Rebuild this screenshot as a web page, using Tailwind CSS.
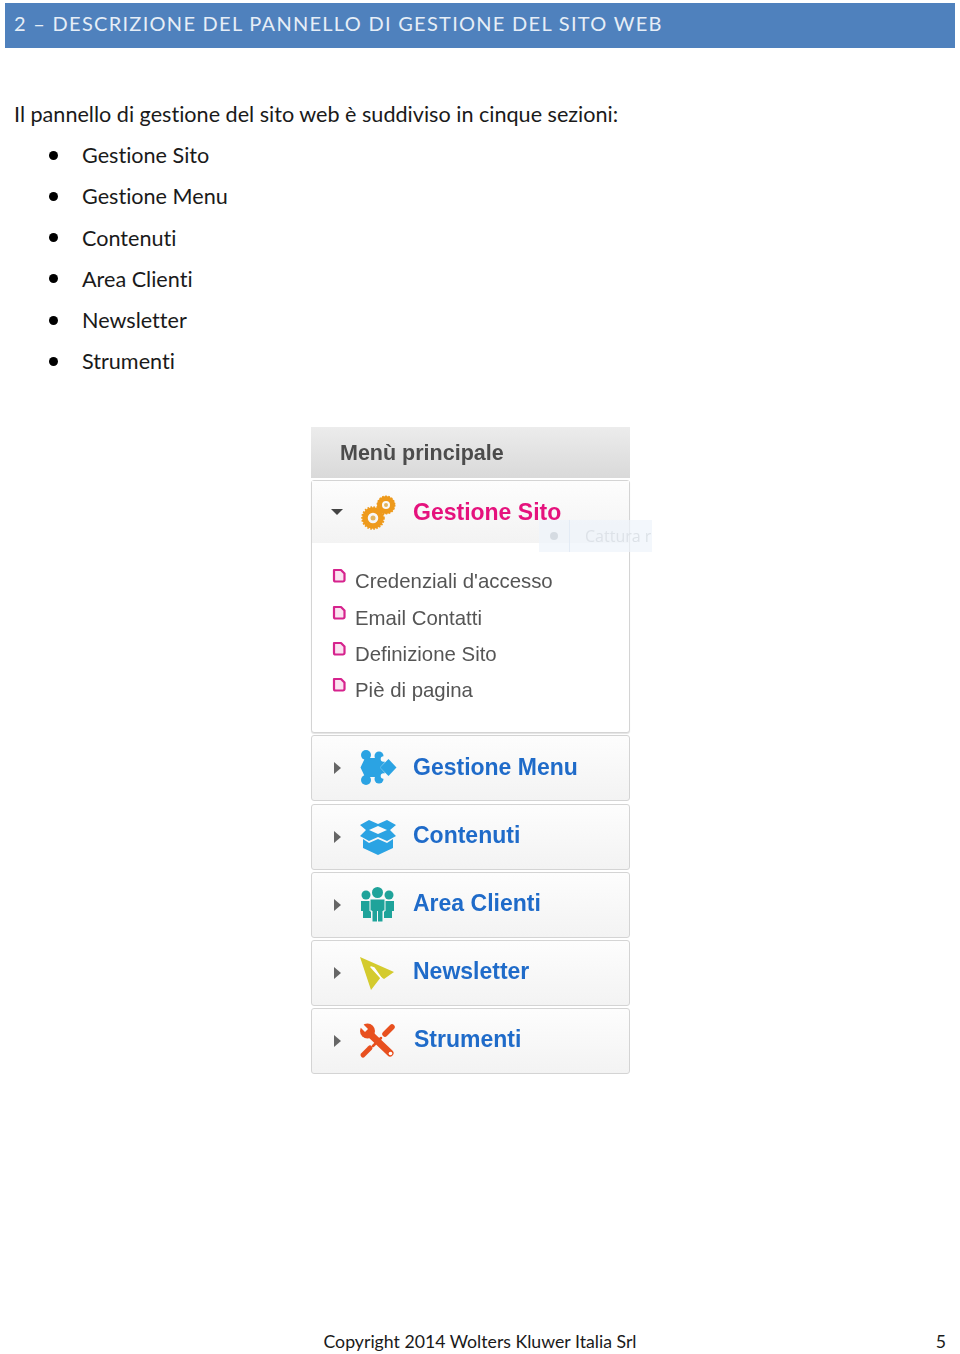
<!DOCTYPE html>
<html lang="it">
<head>
    <meta charset="UTF-8">
    <title>Descrizione del pannello di gestione</title>
    <script src="https://cdn.jsdelivr.net/npm/@tailwindcss/browser@4"></script>
</head>
<body class="bg-white font-['Lato','Open_Sans',sans-serif] text-[#1a1a1a] [font-variant-ligatures:none]">
    <div class="h-[1354px] flex flex-col overflow-hidden">
        <!-- Section title -->
        <header class="mt-[3px] mx-[5px] h-[45px] bg-[#4f81bd] flex items-center pl-[9px] pb-[5px] text-[#e6eef7] text-[20px] tracking-[1.28px]">
            2 – DESCRIZIONE DEL PANNELLO DI GESTIONE DEL SITO WEB
        </header>

        <p class="mt-[52px] ml-[14px] text-[21.6px] leading-[28px]">Il pannello di gestione del sito web è suddiviso in cinque sezioni:</p>

        <ul class="mt-[13px] ml-[49px] flex flex-col gap-[13.3px] text-[21.6px] leading-[28px]">
            <li class="flex items-center"><span class="w-[9px] h-[9px] rounded-full bg-black mr-[24px]"></span>Gestione Sito</li>
            <li class="flex items-center"><span class="w-[9px] h-[9px] rounded-full bg-black mr-[24px]"></span>Gestione Menu</li>
            <li class="flex items-center"><span class="w-[9px] h-[9px] rounded-full bg-black mr-[24px]"></span>Contenuti</li>
            <li class="flex items-center"><span class="w-[9px] h-[9px] rounded-full bg-black mr-[24px]"></span>Area Clienti</li>
            <li class="flex items-center"><span class="w-[9px] h-[9px] rounded-full bg-black mr-[24px]"></span>Newsletter</li>
            <li class="flex items-center"><span class="w-[9px] h-[9px] rounded-full bg-black mr-[24px]"></span>Strumenti</li>
        </ul>

        <!-- Menu screenshot -->
        <div class="relative mt-[52px] ml-[311px] w-[319px] font-['Liberation_Sans',Arial,sans-serif] blur-[0.35px]">
            <div class="h-[51px] bg-gradient-to-b from-[#ececec] to-[#d9d9d9] flex items-center pl-[29px] text-[21.5px] font-bold text-[#4c4c4c]">Menù principale</div>

            <div class="mt-[2px] h-[253px] border border-[#d4d4d4] rounded-[3px] bg-white shadow-[0_1px_1px_#e4e4e4]">
                <div class="h-[62px] bg-gradient-to-b from-[#fdfdfd] to-[#f3f3f3] flex items-center">
                    <svg class="ml-[19px]" width="12" height="6" viewBox="0 0 12 6"><path d="M0 0H12L6 6Z" fill="#444"/></svg>
                    <svg class="ml-[18px]" width="36" height="38" viewBox="0 0 36 38">
                        <circle cx="25" cy="12" r="6.5" fill="none" stroke="#ee9a1c" stroke-width="5"/>
                        <circle cx="25" cy="12" r="8.5" fill="none" stroke="#ee9a1c" stroke-width="2" stroke-dasharray="1.6 1.4"/>
                        <circle cx="25" cy="12" r="2" fill="#e3b55f"/>
                        <circle cx="12" cy="25" r="8" fill="none" stroke="#ee9a1c" stroke-width="5.5"/>
                        <circle cx="12" cy="25" r="10.8" fill="none" stroke="#ee9a1c" stroke-width="2" stroke-dasharray="1.6 1.4"/>
                        <circle cx="12" cy="25" r="2.5" fill="#e3b55f"/>
                    </svg>
                    <span class="ml-[16px] text-[23px] font-bold text-[#e5127d]">Gestione Sito</span>
                </div>
                <ul class="mt-[26px] ml-[20px] flex flex-col gap-[12.1px] text-[20.4px] leading-[24px] text-[#555]">
                    <li class="flex"><svg class="mt-[-1px] mr-[9px]" width="14" height="16" viewBox="0 0 14 16"><path d="M2 2H9L12.500 5.500V12A1.500 1.500 0 0 1 11 13.500H3.500A1.500 1.500 0 0 1 2 12Z" fill="#fbe3f1" stroke="#d6238d" stroke-width="2.200" stroke-linejoin="round"/></svg>Credenziali d'accesso</li>
                    <li class="flex"><svg class="mt-[-1px] mr-[9px]" width="14" height="16" viewBox="0 0 14 16"><path d="M2 2H9L12.500 5.500V12A1.500 1.500 0 0 1 11 13.500H3.500A1.500 1.500 0 0 1 2 12Z" fill="#fbe3f1" stroke="#d6238d" stroke-width="2.200" stroke-linejoin="round"/></svg>Email Contatti</li>
                    <li class="flex"><svg class="mt-[-1px] mr-[9px]" width="14" height="16" viewBox="0 0 14 16"><path d="M2 2H9L12.500 5.500V12A1.500 1.500 0 0 1 11 13.500H3.500A1.500 1.500 0 0 1 2 12Z" fill="#fbe3f1" stroke="#d6238d" stroke-width="2.200" stroke-linejoin="round"/></svg>Definizione Sito</li>
                    <li class="flex"><svg class="mt-[-1px] mr-[9px]" width="14" height="16" viewBox="0 0 14 16"><path d="M2 2H9L12.500 5.500V12A1.500 1.500 0 0 1 11 13.500H3.500A1.500 1.500 0 0 1 2 12Z" fill="#fbe3f1" stroke="#d6238d" stroke-width="2.200" stroke-linejoin="round"/></svg>Piè di pagina</li>
                </ul>
            </div>

            <div class="mt-[2px] flex flex-col gap-[2.1px]">
                <div class="h-[66px] border border-[#d4d4d4] rounded-[3px] bg-gradient-to-b from-[#fdfdfd] to-[#f3f3f3] flex items-center text-[23px] font-bold text-[#1f6bc9] pb-[3px]">
                    <svg class="ml-[22px] mt-[3px]" width="7" height="12" viewBox="0 0 7 12"><path d="M0 0L7 6L0 12Z" fill="#666"/></svg>
                    <svg class="ml-[18px] mt-[3px]" width="38" height="38" viewBox="0 0 38 38">
                        <g fill="#2ba3e3">
                            <circle cx="7" cy="6" r="5"/><circle cx="20" cy="7" r="4.500"/>
                            <circle cx="7" cy="31" r="5"/><circle cx="20" cy="30" r="4.500"/>
                            <path d="M6 9H22L26 13 21 18.500 26 24 22 28H6L1.500 18.500Z"/>
                            <path d="M21 18.500L29.500 10 37.500 18.500 29.500 27Z"/>
                        </g>
                        <circle cx="24.500" cy="10" r="2.800" fill="#fafafa"/><circle cx="24.500" cy="27" r="2.800" fill="#fafafa"/>
                    </svg>
                    <span class="ml-[16px]">Gestione Menu</span>
                </div>
                <div class="h-[66px] border border-[#d4d4d4] rounded-[3px] bg-gradient-to-b from-[#fdfdfd] to-[#f3f3f3] flex items-center text-[23px] font-bold text-[#1f6bc9] pb-[3px]">
                    <svg class="ml-[22px] mt-[3px]" width="7" height="12" viewBox="0 0 7 12"><path d="M0 0L7 6L0 12Z" fill="#666"/></svg>
                    <svg class="ml-[18px] mt-[3px]" width="38" height="36" viewBox="0 0 38 36">
                        <path d="M1 6L10 1 19 5 28 1 37 6 31 11 37 17 28 22 19 18 10 22 1 17 7 11Z" fill="#2ba3e3"/>
                        <path d="M10 11L19 7 28 11 19 15Z" fill="#fafafa"/>
                        <path d="M4 20L10 24 19 20 28 24 34 20V29L19 36 4 29Z" fill="#2ba3e3"/>
                    </svg>
                    <span class="ml-[16px]">Contenuti</span>
                </div>
                <div class="h-[66px] border border-[#d4d4d4] rounded-[3px] bg-gradient-to-b from-[#fdfdfd] to-[#f3f3f3] flex items-center text-[23px] font-bold text-[#1f6bc9] pb-[3px]">
                    <svg class="ml-[22px] mt-[3px]" width="7" height="12" viewBox="0 0 7 12"><path d="M0 0L7 6L0 12Z" fill="#666"/></svg>
                    <svg class="ml-[18px] mt-[3px]" width="38" height="36" viewBox="0 0 38 36">
                        <g fill="#1fa39a">
                            <circle cx="7" cy="8" r="4.500"/><circle cx="30" cy="8" r="4.500"/>
                            <path d="M2 14H12V31H4V24H2ZM25 14H35V24H33V31H25Z"/>
                            <circle cx="18.500" cy="5.500" r="5.500"/>
                        </g>
                        <path d="M11 12H26V24H24V35H13V24H11Z" fill="#1fa39a" stroke="#f8f8f8" stroke-width="1"/>
                        <path d="M18.500 24V35" stroke="#f8f8f8" stroke-width="1"/>
                    </svg>
                    <span class="ml-[16px]">Area Clienti</span>
                </div>
                <div class="h-[66px] border border-[#d4d4d4] rounded-[3px] bg-gradient-to-b from-[#fdfdfd] to-[#f3f3f3] flex items-center text-[23px] font-bold text-[#1f6bc9] pb-[3px]">
                    <svg class="ml-[22px] mt-[3px]" width="7" height="12" viewBox="0 0 7 12"><path d="M0 0L7 6L0 12Z" fill="#666"/></svg>
                    <svg class="ml-[18px] mt-[3px]" width="38" height="36" viewBox="0 0 38 36"><path d="M1 2L35 17 25 24 22 22 12 35Z" fill="#d4cb2e"/><path d="M12 12L22 23 15 13Z" fill="#fff" stroke="#fff" stroke-width="1.500" stroke-linejoin="round"/></svg>
                    <span class="ml-[16px]">Newsletter</span>
                </div>
                <div class="h-[66px] border border-[#d4d4d4] rounded-[3px] bg-gradient-to-b from-[#fdfdfd] to-[#f3f3f3] flex items-center text-[23px] font-bold text-[#1f6bc9] pb-[3px]">
                    <svg class="ml-[22px] mt-[3px]" width="7" height="12" viewBox="0 0 7 12"><path d="M0 0L7 6L0 12Z" fill="#666"/></svg>
                    <svg class="ml-[18px] mt-[3px]" width="38" height="36" viewBox="0 0 38 36">
                        <g fill="none" stroke="#e8501f" stroke-linecap="round">
                            <path d="M26 11L33 4" stroke-width="5.500"/>
                            <path d="M22 15L14 23" stroke-width="2.500"/>
                            <path d="M11 25L4 32" stroke-width="5"/>
                            <path d="M11 11L31 30" stroke-width="7"/>
                        </g>
                        <circle cx="8.500" cy="8" r="7.500" fill="#e8501f"/>
                        <path d="M3 0L9 6 6 9 0 3Z" fill="#fafafa"/>
                        <circle cx="31.500" cy="30.500" r="1.800" fill="#fff"/>
                    </svg>
                    <span class="ml-[17px]">Strumenti</span>
                </div>
            </div>

            <!-- Faded capture toolbar caught in the screenshot -->
            <div class="absolute left-[228px] top-[93px] w-[113px] h-[32px] bg-[#eef4fb]/70 flex items-center font-['Open_Sans',sans-serif] text-[16px] text-[#dde2e8]">
                <span class="w-[31px] h-[32px] border-r border-[#e3ebf5] flex items-center justify-center"><span class="w-[8px] h-[8px] rounded-full bg-[#d5dbe2]"></span></span>
                <span class="ml-[15px]">Cattura r</span>
            </div>
        </div>

        <footer class="mt-auto h-[24px] relative text-[17.7px] leading-[24px] text-center">
            Copyright 2014 Wolters Kluwer Italia Srl
            <span class="absolute right-[14px] top-0">5</span>
        </footer>
    </div>
</body>
</html>
